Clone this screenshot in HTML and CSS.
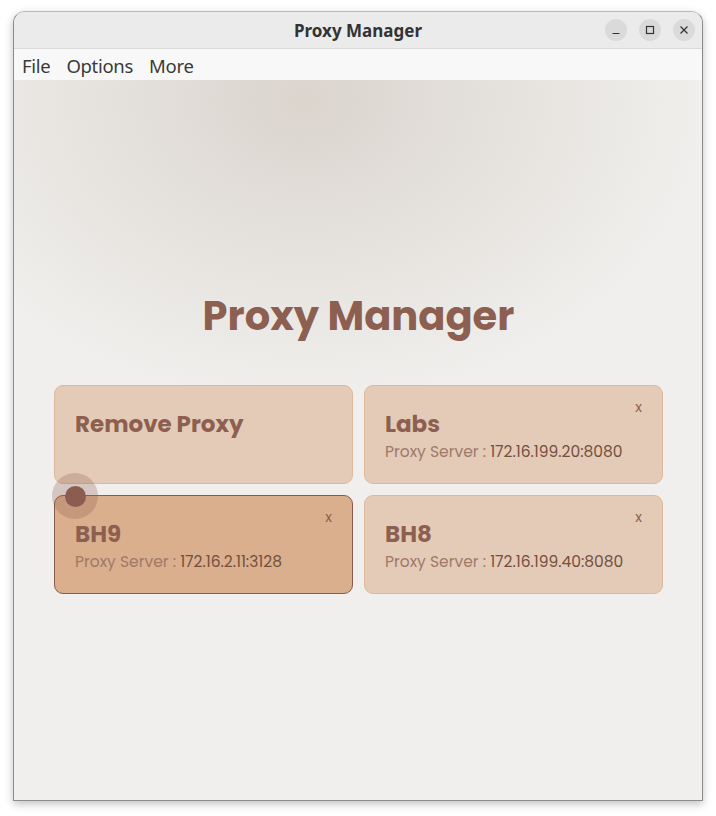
FILE: index.html
```html
<!DOCTYPE html>
<html>
<head>
<meta charset="utf-8">
<link rel="stylesheet" href="styles.css">
</head>
<body>
<div class="window">
  <div class="titlebar">
    <div class="title">Proxy Manager</div>
    <div class="controls">
      <span class="ctl"><svg width="10" height="10" viewBox="0 0 10 10"><path d="M1.5 8.5h7" stroke="#333" stroke-width="1.2"/></svg></span>
      <span class="ctl"><svg width="10" height="10" viewBox="0 0 10 10"><rect x="1.5" y="1.5" width="7" height="7" fill="none" stroke="#333" stroke-width="1.2"/></svg></span>
      <span class="ctl"><svg width="10" height="10" viewBox="0 0 10 10"><path d="M1.5 1.5l7 7M8.5 1.5l-7 7" stroke="#333" stroke-width="1.2"/></svg></span>
    </div>
  </div>
  <div class="menubar">
    <span class="menu">File</span>
    <span class="menu">Options</span>
    <span class="menu">More</span>
  </div>
  <div class="content">
    <h1 class="heading">Proxy Manager</h1>
    <div class="grid">
      <div class="card">
        <div class="card-title">Remove Proxy</div>
      </div>
      <div class="card">
        <span class="close">x</span>
        <div class="card-title">Labs</div>
        <div class="card-sub">Proxy Server : <span class="addr">172.16.199.20:8080</span></div>
      </div>
      <div class="card active">
        <span class="close">x</span>
        <span class="cursor"><span class="dot"></span></span>
        <div class="card-title">BH9</div>
        <div class="card-sub">Proxy Server : <span class="addr">172.16.2.11:3128</span></div>
      </div>
      <div class="card">
        <span class="close">x</span>
        <div class="card-title">BH8</div>
        <div class="card-sub">Proxy Server : <span class="addr">172.16.199.40:8080</span></div>
      </div>
    </div>
  </div>
</div>
</body>
</html>
```

FILE: styles.css
```css
html, body {
  margin: 0;
  padding: 0;
  background: #ffffff;
}
body {
  padding: 11px 13px 0 13px;
  width: 716px;
  height: 816px;
  box-sizing: border-box;
  overflow: hidden;
}
.window {
  height: 788px;
  border: 1px solid #8c8c8c;
  border-top-color: #b9b9b9;
  border-radius: 12px 12px 0 0;
  overflow: hidden;
  display: flex;
  flex-direction: column;
  box-shadow: 0 3px 8px rgba(0,0,0,0.25);
  background: #f0efed;
}
.titlebar {
  height: 36px;
  background: #ebebeb;
  border-bottom: 1px solid #dadada;
  position: relative;
  display: flex;
  align-items: center;
  justify-content: center;
  flex: none;
}
.title {
  font-family: "Noto Sans", "DejaVu Sans", sans-serif;
  font-weight: 700;
  font-size: 17px;
  color: #333;
}
.controls {
  position: absolute;
  right: 7px;
  top: 7px;
  display: flex;
  gap: 12px;
}
.ctl {
  width: 22px;
  height: 22px;
  border-radius: 50%;
  background: #dadada;
  display: flex;
  align-items: center;
  justify-content: center;
}
.menubar {
  height: 31px;
  background: #f8f8f8;
  display: flex;
  align-items: center;
  padding: 2px 0 0 8px;
  box-sizing: border-box;
  gap: 16px;
  flex: none;
}
.menu {
  font-family: "Noto Sans", "DejaVu Sans", sans-serif;
  font-size: 18.5px;
  color: #3a3a3a;
  letter-spacing: -0.3px;
}
.content {
  flex: 1;
  background:
    radial-gradient(ellipse 400px 300px at 290px 20px, rgba(210,202,193,0.72), rgba(240,239,237,0) 100%),
    #f0efed;
  padding: 210px 39px 0 40px;
}
.heading {
  margin: 0 0 43px 0;
  text-align: center;
  font-family: "Poppins", "Inter", sans-serif;
  font-weight: 700;
  font-size: 40px;
  letter-spacing: 0;
  color: #8d5f50;
  line-height: 52px;
}
.grid {
  display: grid;
  grid-template-columns: 1fr 1fr;
  gap: 11px 11px;
}
.card {
  position: relative;
  height: 99px;
  box-sizing: border-box;
  background: #e4cbb8;
  border: 1px solid #ddb999;
  border-radius: 9px;
  padding: 21px 20px 0 20px;
  font-family: "Poppins", "Inter", sans-serif;
}
.card.active {
  background: #d9af8d;
  border-color: #8a5a4c;
}
.card-title {
  font-weight: 700;
  font-size: 23px;
  color: #8d5f50;
  line-height: 34px;
}
.card-sub {
  font-size: 15.5px;
  color: #a07a68;
  margin-top: -1px;
}
.addr {
  color: #74503f;
}
.close {
  position: absolute;
  right: 20px;
  top: 11px;
  font-size: 14px;
  color: #8d5f50;
}
.cursor {
  position: absolute;
  left: -3px;
  top: -23px;
  width: 46px;
  height: 46px;
  border-radius: 50%;
  background: rgba(145, 95, 80, 0.28);
  display: flex;
  align-items: center;
  justify-content: center;
}
.dot {
  width: 21px;
  height: 21px;
  border-radius: 50%;
  background: #8c5c50;
}
```
